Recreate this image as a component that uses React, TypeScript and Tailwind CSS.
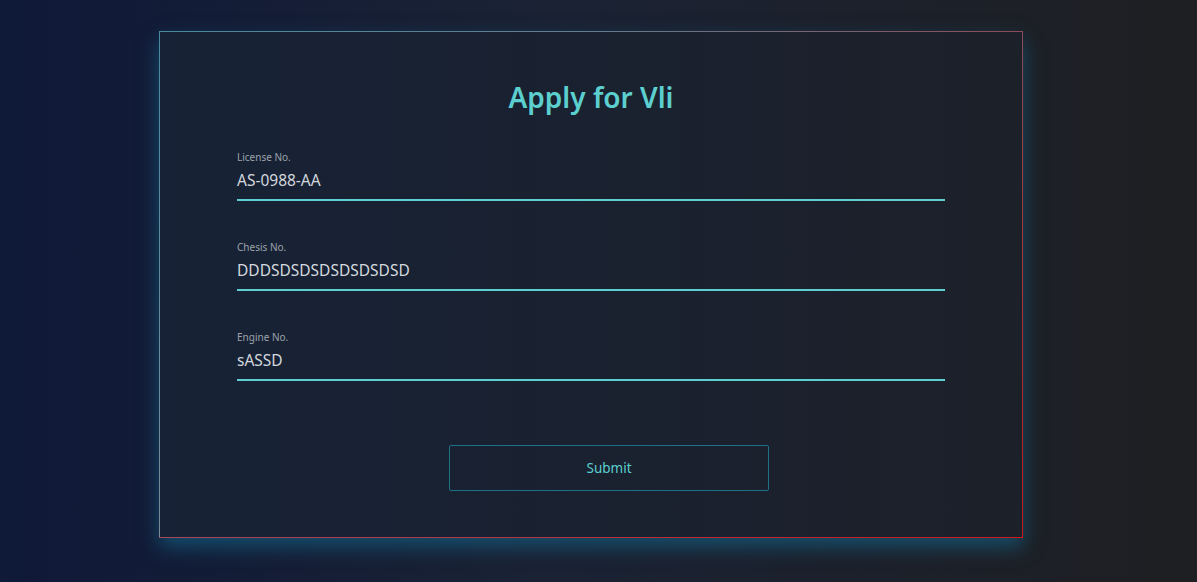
import React from "react";

const fields = [
  { label: "License No.", value: "AS-0988-AA" },
  { label: "Chesis No.", value: "DDDSDSDSDSDSDSDSD" },
  { label: "Engine No.", value: "sASSD" },
];

export default function App() {
  return (
    <div
      className="w-full min-h-[582px] h-[582px] overflow-hidden bg-[linear-gradient(to_right,#0f1938,#1a2234_45%,#1e1f22)] pt-[31px] pl-[159px]"
      style={{ fontFamily: '"Noto Sans", "Open Sans", sans-serif' }}
    >
      <div className="w-[864px] h-[507px] flex flex-col shadow-[0_9px_18px_rgba(20,95,130,0.7)]">
        <div className="flex-1 pt-[1px] px-[1px] [background:linear-gradient(to_right,#4a8a9e,#627c8c_50%,#8a4c58)_top/100%_1px_no-repeat,linear-gradient(to_bottom,#8a4c58,#c4181e)_right/1px_100%_no-repeat,linear-gradient(to_bottom,#4a8a9e,#7a8a98)_left/1px_100%_no-repeat]">
          <div className="w-full h-full bg-[linear-gradient(to_right,#172236,#1c2029)] pt-[45px] flex flex-col items-center">
            <h1 className="h-[40px] leading-[40px] text-[28px] font-semibold text-[#5ccfcf]">
              Apply for Vli
            </h1>
            <div className="w-[708px] mt-[33px] flex flex-col">
              <div className="flex flex-col gap-[39px]">
                {fields.map((f) => (
                  <div key={f.label} className="flex flex-col border-b-2 border-[#5ecfd0] pb-[8px]">
                    <div className="h-[14px] leading-[14px] text-[10px] text-[#9ca3ab]">{f.label}</div>
                    <div className="mt-[5px] h-[22px] leading-[22px] text-[15.5px] text-[#d3d8de]">{f.value}</div>
                  </div>
                ))}
              </div>
              <button className="mt-[64px] ml-[212px] w-[320px] h-[46px] border border-[#1e7186] rounded-[2px] text-[13.5px] text-[#5ccfcf] bg-transparent">
                Submit
              </button>
            </div>
          </div>
        </div>
        <div className="h-[1px] shrink-0 bg-[linear-gradient(to_right,#a84858,#b83040_50%,#d0181e)]" />
      </div>
    </div>
  );
}
